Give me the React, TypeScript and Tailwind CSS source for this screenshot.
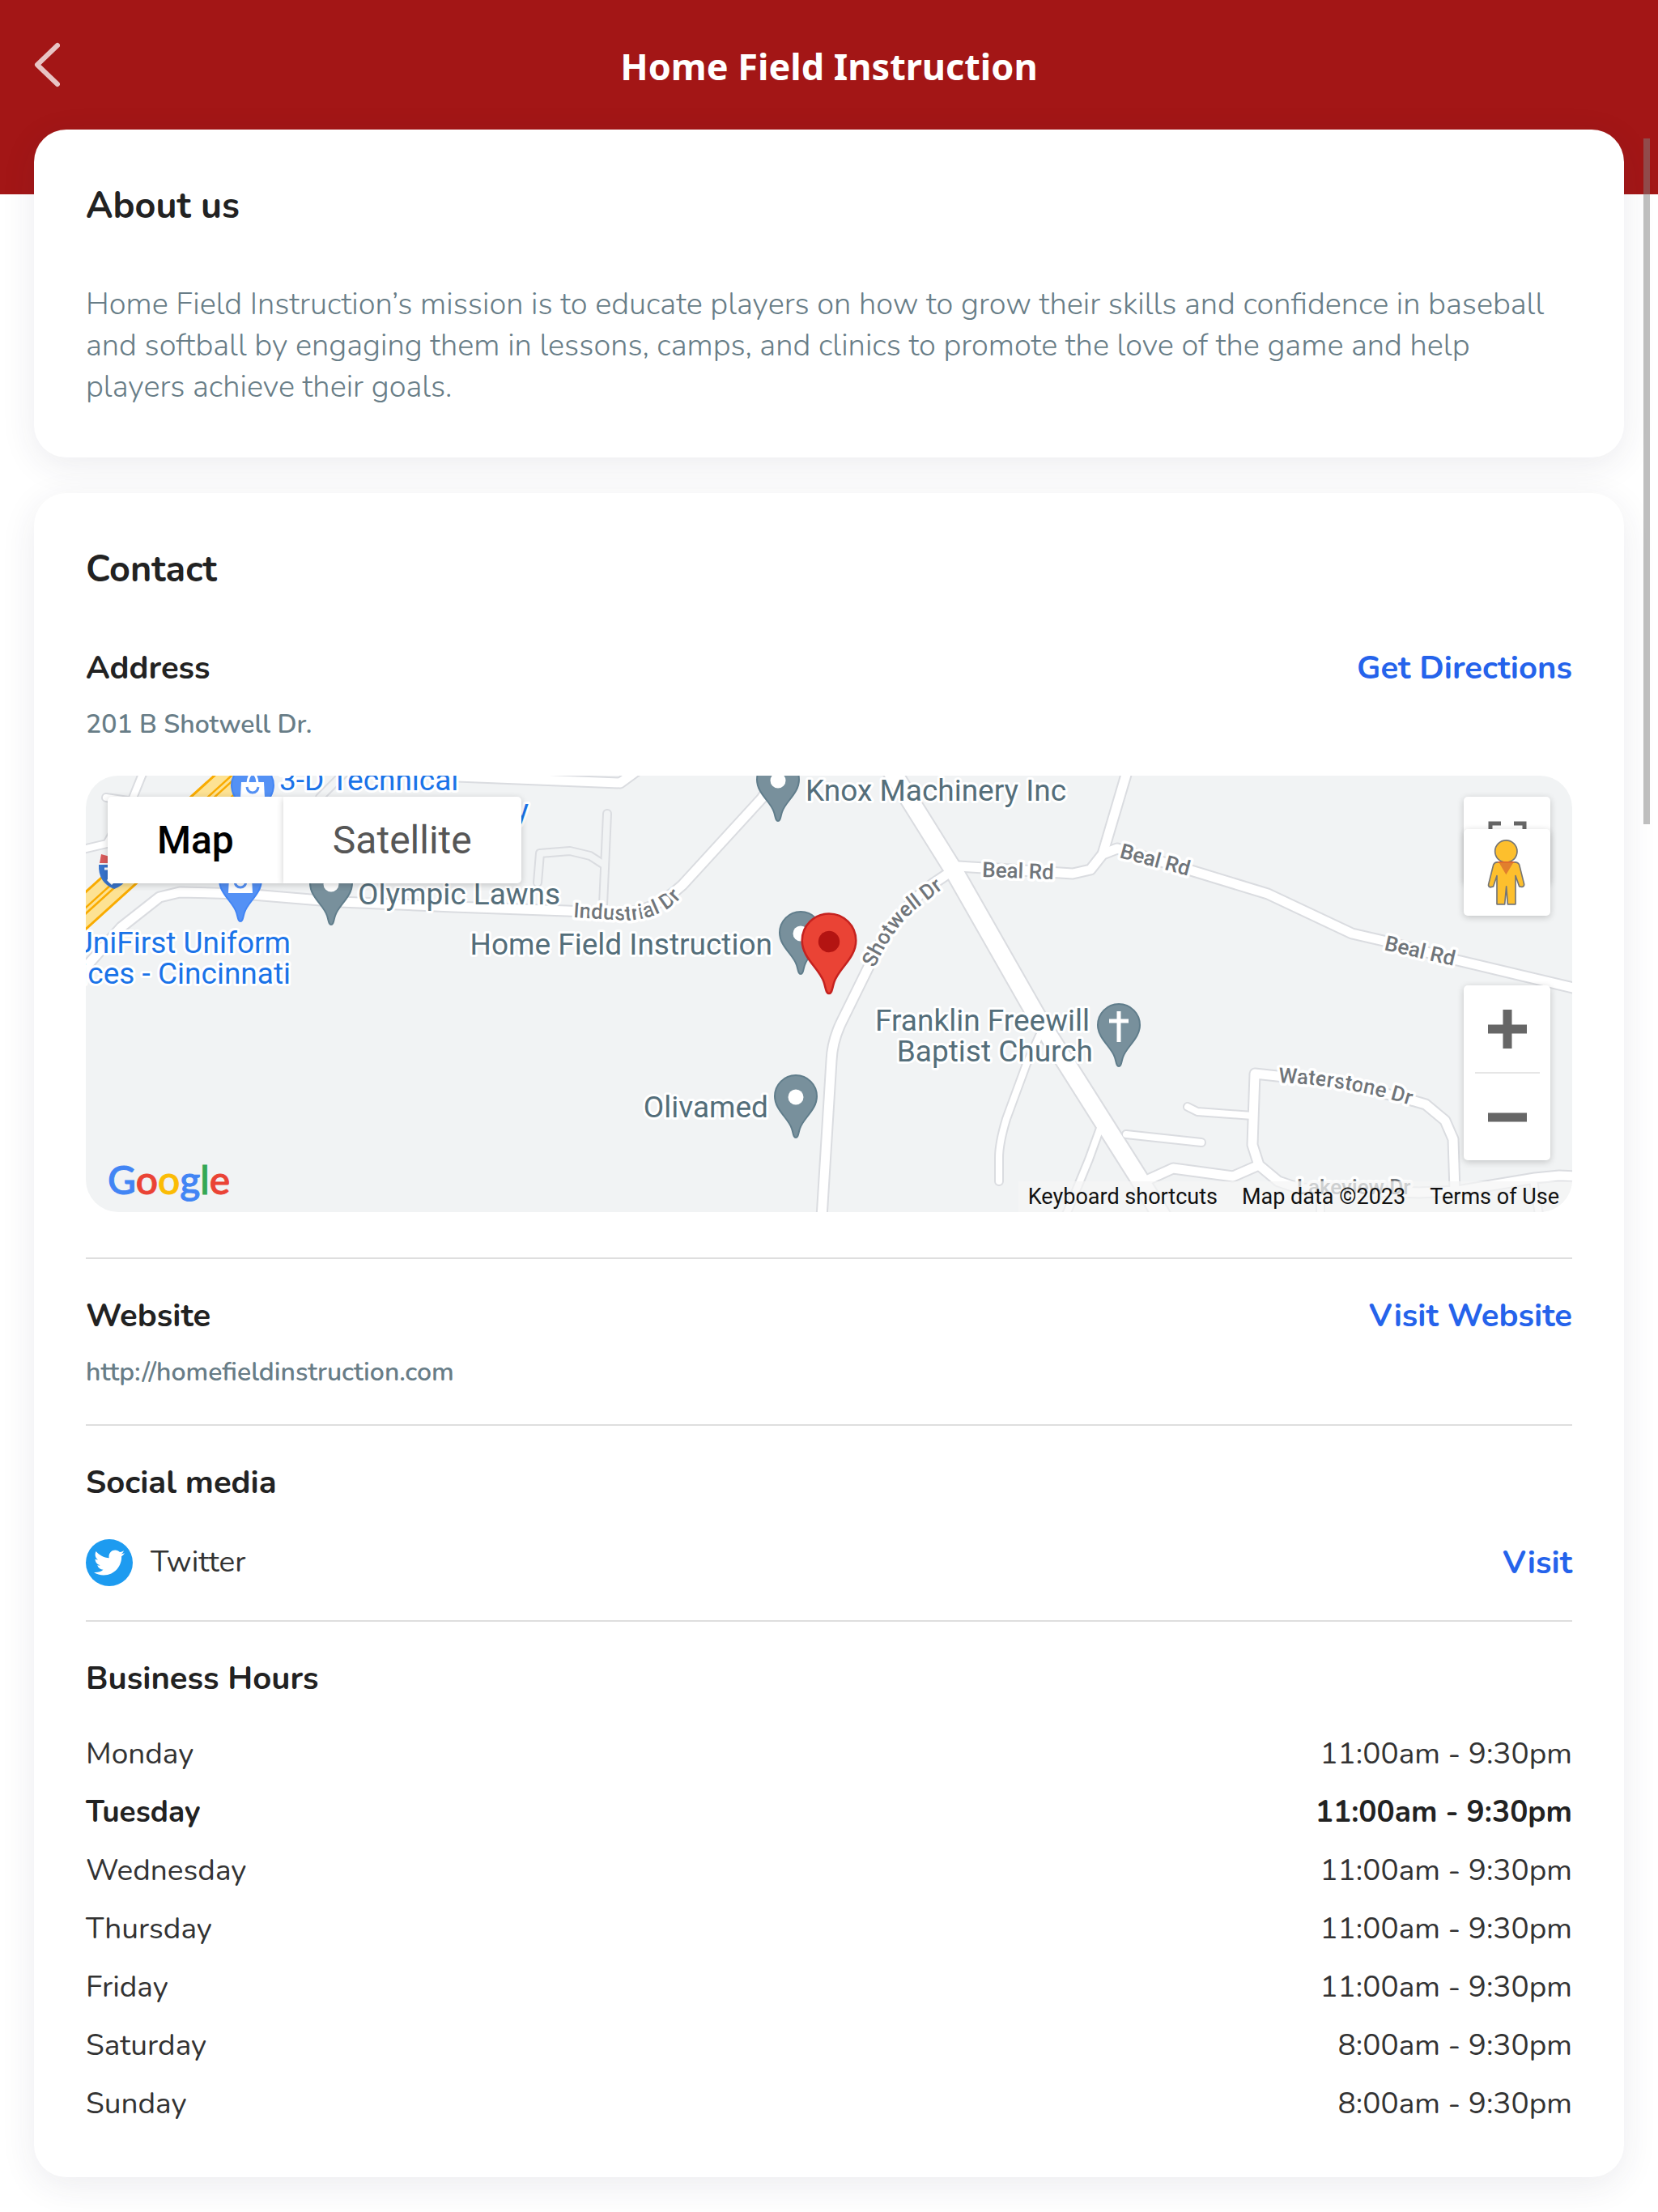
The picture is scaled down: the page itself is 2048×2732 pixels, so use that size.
import { FaTwitter } from "react-icons/fa";

const MINOR_ROADS = [
  "M180 946 L163 988 L132 1042 L98 1050",
  "M165 990 L131 985",
  "M750 1005 L745 1118",
  "M664 1090 L667 1054 L704 1051 L729 1057 L746 1068",
  "M395 985 L430 950",
  "M1284 1279 L1268 1314 L1243 1382 Q1234 1412 1234 1430 L1234 1459",
  "M1362 1385 L1345 1432 L1317 1500",
  "M1391 1401 L1484 1411",
  "M1467 1367 L1479 1373 L1547 1378",
  "M1631 1475 L1631 1500",
  "M1894 1458 L1901 1500",
];

const ROADS = [
  "M92 1210 L150 1145 L197 1108 L222 1102 L300 1104 L420 1114 L560 1120 L700 1125 L765 1128 Q805 1128 843 1093 L941 986 L966 950",
  "M540 958 L640 962 L766 967 L792 948",
  "M1180 1074 L1168 1081 Q1105 1120 1072 1196 L1040 1261 Q1028 1285 1027 1310 L1015 1504",
  "M1184 1070 L1325 1079 L1347 1074 L1362 1055 L1380 1048 L1471 1075 L1566 1104 L1670 1153 L1709 1162 L1800 1186 L1960 1224",
  "M1393 950 L1362 1055",
  "M1418 1457 L1449 1443 L1523 1453 L1555 1439",
  "M1744 1359 L1761 1364 L1785 1384 L1795 1407 L1797 1471",
  "M1744 1359 L1660 1338 L1550 1326 L1547 1414 L1555 1439 L1579 1459 L1605 1468 L1753 1473 L1800 1471 L1896 1455 L1926 1452 L1950 1453",
];

const PIN =
  "M0 0 C-3 0 -3 -5 -5 -11 C-9 -24 -26 -34 -26 -51 A26 26 0 1 1 26 -51 C26 -34 9 -24 5 -11 C3 -5 3 0 0 0Z";

function PlacePin({ x, y, cross = false }: { x: number; y: number; cross?: boolean }) {
  return (
    <g transform={`translate(${x} ${y})`}>
      <path d={PIN} fill="#78909c" stroke="#607d8b" strokeWidth="2" />
      {cross ? (
        <path d="M0 -68 V-30 M-12 -56 H12" stroke="#fff" strokeWidth="5" />
      ) : (
        <circle cy="-50" r="9.5" fill="#fff" />
      )}
    </g>
  );
}

function ShopPin({ x, y }: { x: number; y: number }) {
  return (
    <g transform={`translate(${x} ${y})`}>
      <path d={PIN} fill="#5491f5" stroke="#4285f4" strokeWidth="2" />
      <path d="M-14 -55 H14 L15 -35 H-15Z" fill="#fff" />
      <path d="M-6 -54 Q-5 -65 0 -65 Q5 -65 6 -54" fill="none" stroke="#fff" strokeWidth="3" />
      <path d="M-7 -49 Q-6 -42 0 -42 Q6 -42 7 -49" fill="none" stroke="#5491f5" strokeWidth="3" />
    </g>
  );
}

function MapCanvas() {
  return (
    <svg
      viewBox="106 958 1836 539"
      preserveAspectRatio="xMidYMid slice"
      className="block h-full w-full font-['Roboto',sans-serif]"
      aria-label="Map around 201 B Shotwell Dr."
    >
      <rect x="0" y="900" width="2048" height="700" fill="#f1f3f4" />
      <g fill="none" strokeLinejoin="round" strokeLinecap="round">
        <g stroke="#dadce0">
          <g strokeWidth="12">{MINOR_ROADS.map((d) => <path key={d} d={d} />)}</g>
          <g strokeWidth="15">{ROADS.map((d) => <path key={d} d={d} />)}</g>
          <path d="M1100 950 L1178 1075 L1284 1261 L1406 1454 L1440 1510" strokeWidth="25" />
        </g>
        <g stroke="#fff">
          <g strokeWidth="8">
            {MINOR_ROADS.map((d, i) => (
              <path key={d} d={d} stroke={i === 2 || i === 3 || i === 4 ? "#f1f3f4" : "#fff"} />
            ))}
          </g>
          <g strokeWidth="11">{ROADS.map((d) => <path key={d} d={d} />)}</g>
          <path d="M1100 950 L1178 1075 L1284 1261 L1406 1454 L1440 1510" strokeWidth="21" />
        </g>
        <path d="M90 1139 L300 949" stroke="#f9ab00" strokeWidth="37" />
        <path d="M90 1139 L300 949" stroke="#fde293" strokeWidth="31" />
        <path d="M90 1139 L300 949" stroke="#f9ab00" strokeWidth="8" />
        <path d="M90 1139 L300 949" stroke="#fde293" strokeWidth="3" />
      </g>
      <path d="M122 1068 H160 Q162 1090 141 1098 Q121 1090 122 1068Z" fill="#3874cb" />
      <path d="M125 1055 L150 1062 V1066 H123Z" fill="#d85b5b" />
      <path d="M129 1073 H140 M133 1086 L139 1092" stroke="#fff" strokeWidth="3" />

      <ShopPin x={312} y={1021} />
      <ShopPin x={297} y={1138} />
      <PlacePin x={409} y={1142} />
      <PlacePin x={961} y={1014} />
      <PlacePin x={989} y={1203} />
      <PlacePin x={983} y={1405} />
      <PlacePin x={1382} y={1317} cross />

      <defs>
        <path id="industrial" d="M708 1133 L775 1137 Q812 1135 836 1114 L870 1078" />
        <path id="shotwell" d="M1080 1196 Q1102 1148 1130 1124 L1172 1092" />
        <path id="waterstone" d="M1579 1337 Q1665 1340 1752 1368" />
      </defs>
      <g fontSize="26" fontWeight="500" fill="#70757a" stroke="#fff" strokeWidth="7" strokeLinejoin="round" className="[paint-order:stroke]">
        <text><textPath href="#industrial">Industrial Dr</textPath></text>
        <text><textPath href="#shotwell">Shotwell Dr</textPath></text>
        <text><textPath href="#waterstone">Waterstone Dr</textPath></text>
        <text transform="translate(1213 1083) rotate(2)">Beal Rd</text>
        <text transform="translate(1382 1059) rotate(15)">Beal Rd</text>
        <text transform="translate(1709 1173) rotate(13)">Beal Rd</text>
        <text x="1602" y="1475">Lakeview Dr</text>
      </g>
      <g fontSize="37" fill="#546e7a" stroke="#fff" strokeWidth="6" strokeLinejoin="round" className="[paint-order:stroke]">
        <text x="442" y="1117">Olympic Lawns</text>
        <text x="995" y="989">Knox Machinery Inc</text>
        <text x="954" y="1179" textAnchor="end">Home Field Instruction</text>
        <text x="949" y="1380" textAnchor="end">Olivamed</text>
        <text x="1346" y="1273" textAnchor="end">Franklin Freewill</text>
        <text x="1350" y="1311" textAnchor="end">Baptist Church</text>
        <g fill="#1a73e8">
          <text x="345" y="976">3-D Technical</text>
          <text x="653" y="1013" textAnchor="end">y</text>
          <text x="359" y="1177" textAnchor="end">UniFirst Uniform</text>
          <text x="359" y="1215" textAnchor="end">Services - Cincinnati</text>
        </g>
      </g>
      <g transform="translate(1024 1227) scale(1.28)">
        <path d={PIN} fill="#ea4335" stroke="#c5221f" strokeWidth="2" />
        <circle cy="-50" r="10.3" fill="#b31412" />
      </g>
    </svg>
  );
}

function Pegman() {
  return (
    <svg viewBox="24 164 321 320" className="h-full w-full" aria-hidden="true">
      <g fill="#fdbf2d" stroke="#757575" strokeWidth="5" strokeLinejoin="round">
        <path d="M148 286 H214 Q226 286 230 296 L248 368 Q248 376 240 378 L230 376 L216 336 V442 H187 L182 376 L176 442 H147 V336 L134 376 L122 379 Q114 376 116 368 L134 296 Q138 286 148 286Z" />
        <circle cx="181" cy="246" r="41" />
      </g>
      <path d="M153 284 H210 L181 332Z" fill="#e17f2d" />
      <path d="M150 286 H212" stroke="#e0662a" strokeWidth="5" />
    </svg>
  );
}

function MapPanel() {
  const control = "bg-white shadow-[0_2px_8px_rgba(0,0,0,0.2)]";
  return (
    <div className="relative mt-[41px] h-[539px] overflow-hidden rounded-[40px] font-['Roboto',sans-serif]">
      <MapCanvas />
      <div className="absolute top-[26px] left-[27px] flex h-[107px] text-[48px]">
        <button className={`rounded-l-[5px] px-[61px] font-medium text-black ${control}`}>Map</button>
        <button className={`rounded-r-[5px] px-[61px] text-[#565656] ${control}`}>Satellite</button>
      </div>
      <div className="absolute top-[26px] right-[27px] w-[107px]">
        <button aria-label="Toggle fullscreen view" className={`flex h-[107px] w-full items-center justify-center rounded-[5px] ${control}`}>
          <svg viewBox="0 0 48 48" className="size-12" fill="none" stroke="#666" strokeWidth="5" aria-hidden="true">
            <path d="M3 16 V3 H16 M32 3 H45 V16 M45 32 V45 H32 M16 45 H3 V32" />
          </svg>
        </button>
        <button aria-label="Drag Pegman onto the map" className={`relative -mt-[67px] block h-[107px] w-full rounded-[5px] ${control}`}>
          <Pegman />
        </button>
      </div>
      <div className={`absolute right-[27px] bottom-16 flex w-[107px] flex-col items-center rounded-[5px] ${control}`}>
        <button aria-label="Zoom in" className="flex h-[107px] w-full items-center justify-center">
          <svg viewBox="0 0 48 48" className="size-12" stroke="#666" strokeWidth="11" aria-hidden="true">
            <path d="M24 0 V48 M0 24 H48" />
          </svg>
        </button>
        <div className="h-[2px] w-20 bg-[#e6e6e6]" />
        <button aria-label="Zoom out" className="flex h-[107px] w-full items-center justify-center">
          <svg viewBox="0 0 48 48" className="size-12" stroke="#666" strokeWidth="11" aria-hidden="true">
            <path d="M0 24 H48" />
          </svg>
        </button>
      </div>
      <a
        href="#google"
        aria-label="Google"
        className="absolute bottom-2.5 left-[27px] font-['Lato',sans-serif] text-[48px] leading-[60px] font-medium [paint-order:stroke] [-webkit-text-stroke:1px_currentColor]"
      >
        <span className="text-[#4285f4]">G</span>
        <span className="text-[#ea4335]">o</span>
        <span className="text-[#fbbc04]">o</span>
        <span className="text-[#4285f4]">g</span>
        <span className="text-[#34a853]">l</span>
        <span className="text-[#ea4335]">e</span>
      </a>
      <div className="absolute right-0 bottom-0 flex h-[38px] items-center gap-[30px] bg-[#f5f5f5]/70 pr-4 pl-3 text-[27px] text-[#111]">
        <button>Keyboard shortcuts</button>
        <span>Map data ©2023</span>
        <a href="#terms">Terms of Use</a>
      </div>
    </div>
  );
}

const CARD = "rounded-[40px] bg-white px-16 pt-16 shadow-[0_10px_44px_rgba(40,40,80,0.09)]";
const TITLE = "text-[45px] leading-[62px] font-bold";
const SUBTITLE = "text-[40px] leading-[56px] font-bold";
const LINK = "text-[40px] leading-[56px] font-bold text-[#2563eb]";
const DETAIL = "mt-5 text-[32px] leading-[44px] font-semibold text-[#687d87]";
const SECTION = "border-t-2 border-[#dedede] pt-[42px]";

const HOURS = [
  ["Monday", "11:00am - 9:30pm"],
  ["Tuesday", "11:00am - 9:30pm"],
  ["Wednesday", "11:00am - 9:30pm"],
  ["Thursday", "11:00am - 9:30pm"],
  ["Friday", "11:00am - 9:30pm"],
  ["Saturday", "8:00am - 9:30pm"],
  ["Sunday", "8:00am - 9:30pm"],
];
const TODAY = "Tuesday";

export default function App() {
  return (
    <div className="relative min-h-screen bg-white pb-[43px] font-['Nunito','Lato',sans-serif] text-[#222]">
      <header className="bg-[#a31616] pb-20">
        <div className="grid h-40 grid-cols-[1fr_auto_1fr] items-center px-[42px]">
          <button aria-label="Back" className="w-8 text-white/75">
            <svg viewBox="0 0 32 56" className="h-14 w-8" fill="none" stroke="currentColor" strokeWidth="6" strokeLinecap="round" strokeLinejoin="round" aria-hidden="true">
              <path d="M29 4 L4 28 L29 52" />
            </svg>
          </button>
          <h1 className="pt-1 font-['Noto_Sans',sans-serif] text-[45px] leading-[60px] font-bold text-white">Home Field Instruction</h1>
        </div>
      </header>
      <main className="relative -mt-20 flex flex-col gap-11 px-[42px]">
        <section className={`${CARD} pb-[62px]`}>
          <h2 className={TITLE}>About us</h2>
          <p className="mt-16 text-[38px] leading-[51px] font-[320] text-[#687d87]">
            Home Field Instruction’s mission is to educate players on how to grow their skills and confidence in baseball and softball by engaging them in lessons, camps, and clinics to promote the love of the game and help players achieve their goals.
          </p>
        </section>
        <section className={`${CARD} pb-[54px]`}>
          <h2 className={TITLE}>Contact</h2>
          <div className="mt-[62px] pb-14">
            <div className="flex justify-between">
              <h3 className={SUBTITLE}>Address</h3>
              <a href="#directions" className={LINK}>Get Directions</a>
            </div>
            <p className={DETAIL}>201 B Shotwell Dr.</p>
            <MapPanel />
          </div>
          <div className={`${SECTION} pb-[42px]`}>
            <div className="flex justify-between">
              <h3 className={SUBTITLE}>Website</h3>
              <a href="http://homefieldinstruction.com" className={LINK}>Visit Website</a>
            </div>
            <p className={DETAIL}>http://homefieldinstruction.com</p>
          </div>
          <div className={`${SECTION} pb-[42px]`}>
            <h3 className={SUBTITLE}>Social media</h3>
            <div className="mt-[42px] flex h-[58px] items-center gap-[22px]">
              <span className="flex size-[58px] items-center justify-center rounded-full bg-[#1d9bf0]">
                <FaTwitter className="size-[38px] text-white" aria-hidden="true" />
              </span>
              <span className="flex-1 text-[37px] text-[#333]">Twitter</span>
              <a href="#twitter" className={LINK}>Visit</a>
            </div>
          </div>
          <div className={SECTION}>
            <h3 className={SUBTITLE}>Business Hours</h3>
            <table className="mt-[30px] w-full text-[37px]">
              <tbody>
                {HOURS.map(([day, time]) => {
                  const weight = day === TODAY ? "font-bold" : "font-normal text-[#333]";
                  return (
                    <tr key={day} className="h-[72px]">
                      <th scope="row" className={`p-0 text-left ${weight}`}>{day}</th>
                      <td className={`p-0 text-right ${weight}`}>{time}</td>
                    </tr>
                  );
                })}
              </tbody>
            </table>
          </div>
        </section>
      </main>
      <div className="absolute top-[171px] right-[10px] h-[847px] w-2 bg-[#808080]/50" />
    </div>
  );
}
